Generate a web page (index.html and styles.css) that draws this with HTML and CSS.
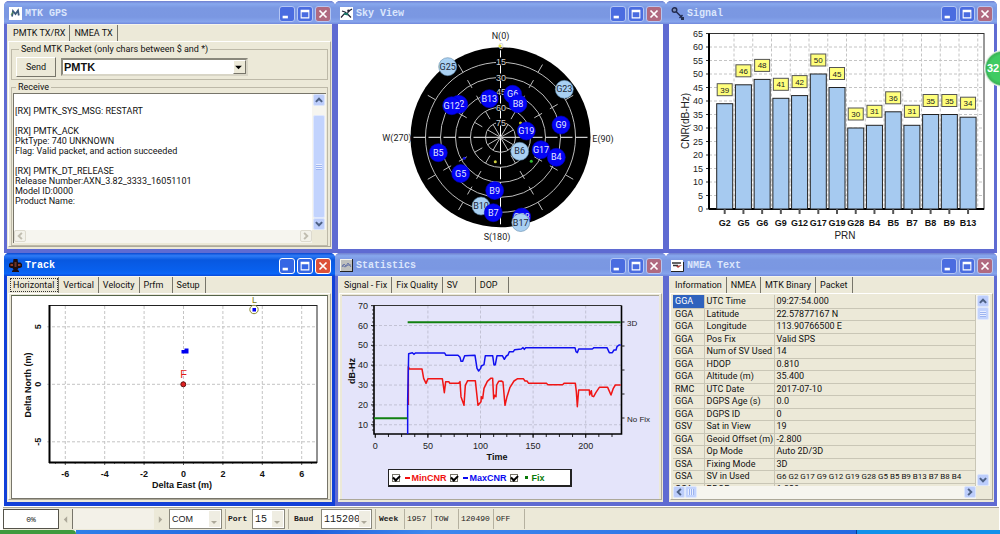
FILE: index.html
```html
<!DOCTYPE html>
<html lang="en">
<head>
<meta charset="utf-8">
<title>MTK GPS</title>
<link rel="stylesheet" href="styles.css">
</head>
<body>
<svg class="defs" aria-hidden="true">
  <symbol id="i-min" viewBox="0 0 16 16"><rect x="3" y="10" width="6" height="3" fill="#fff"/></symbol>
  <symbol id="i-max" viewBox="0 0 16 16"><path d="M3 3h10v10H3z M4.200 6v5.800h7.600V6z" fill="#fff" fill-rule="evenodd"/></symbol>
  <symbol id="i-close" viewBox="0 0 16 16"><path d="M4 4l8 8M12 4l-8 8" stroke="#fff" stroke-width="2"/></symbol>
  <symbol id="a-up" viewBox="0 0 8 8"><path d="M1.500 5.500L4 3l2.500 2.500" fill="none" stroke="currentColor" stroke-width="1.600"/></symbol>
  <symbol id="a-down" viewBox="0 0 8 8"><path d="M1.500 2.500L4 5l2.500-2.500" fill="none" stroke="currentColor" stroke-width="1.600"/></symbol>
  <symbol id="a-left" viewBox="0 0 8 8"><path d="M5.500 1.500L3 4l2.500 2.500" fill="none" stroke="currentColor" stroke-width="1.600"/></symbol>
  <symbol id="a-right" viewBox="0 0 8 8"><path d="M2.500 1.500L5 4L2.500 6.500" fill="none" stroke="currentColor" stroke-width="1.600"/></symbol>
</svg>
<main class="desktop">

  <section class="win">
    <header class="title">
      <svg class="ico" viewBox="0 0 13 13"><rect width="13" height="13" fill="#fff"/><path d="M3 9.500L4 4l2.500 3L9 3.500l.8 5" fill="none" stroke="#3c5a7c" stroke-width="1.800"/><path d="M2 8l2-3" stroke="#5a9a50" stroke-width="1"/></svg>
      <h2>MTK GPS</h2>
      <button class="cap" aria-label="Minimize"><svg><use href="#i-min"/></svg></button><button class="cap" aria-label="Maximize"><svg><use href="#i-max"/></svg></button><button class="cap close" aria-label="Close"><svg><use href="#i-close"/></svg></button>
    </header>
    <div class="body">
      <nav class="tabs"><button class="tab on">PMTK TX/RX</button><button class="tab">NMEA TX</button></nav>
      <div class="page">
        <fieldset class="group send">
          <legend>Send MTK Packet (only chars between $ and *)</legend>
          <div class="sendrow">
            <button class="push">Send</button>
            <div class="combo"><input type="text" value="PMTK" aria-label="Packet"><button aria-label="Open list"><svg viewBox="0 0 8 8"><path d="M1 2.500h6L4 5.500z"/></svg></button></div>
          </div>
        </fieldset>
        <fieldset class="group receive">
          <legend>Receive</legend>
          <div class="scrollbox">
            <textarea aria-label="Receive" readonly>

[RX] PMTK_SYS_MSG: RESTART

[RX] PMTK_ACK
PktType: 740 UNKNOWN
Flag: Valid packet, and action succeeded

[RX] PMTK_DT_RELEASE
Release Number:AXN_3.82_3333_16051101
Model ID:0000
Product Name:</textarea>
            <div class="vbar"><button aria-label="Up"><svg><use href="#a-up"/></svg></button><i class="gap-s"></i><i class="thumb"></i><button aria-label="Down"><svg><use href="#a-down"/></svg></button></div>
            <div class="hbar off"><button aria-label="Left"><svg><use href="#a-left"/></svg></button><i class="gap"></i><button aria-label="Right"><svg><use href="#a-right"/></svg></button></div>
          </div>
        </fieldset>
      </div>
    </div>
  </section>

  <section class="win">
    <header class="title">
      <svg class="ico" viewBox="0 0 13 13"><rect width="13" height="13" fill="#fff"/><path d="M1 10.500l3-3.500h3l2-3 3-2M2 4l3 1 3 2.500 3 3" fill="none" stroke="#223" stroke-width="1.200"/><path d="M4 6.500l4 1" stroke="#1b7b6a" stroke-width="2.200"/><circle cx="8.500" cy="3.800" r="1.300" fill="#223"/></svg>
      <h2>Sky View</h2>
      <button class="cap" aria-label="Minimize"><svg><use href="#i-min"/></svg></button><button class="cap" aria-label="Maximize"><svg><use href="#i-max"/></svg></button><button class="cap close" aria-label="Close"><svg><use href="#i-close"/></svg></button>
    </header>
    <div class="body white"><svg id="sky" class="chart" viewBox="338 24 325 225" role="img" aria-label="Sky view"></svg></div>
  </section>

  <section class="win">
    <header class="title">
      <svg class="ico" viewBox="0 0 13 13"><circle cx="3.500" cy="3" r="2.300" fill="#7d8fb8" stroke="#222b50" stroke-width="1.400"/><path d="M5 4.500L11 10.500M8.500 11L11.500 8" stroke="#222b50" stroke-width="1.500"/><rect x="10" y="10" width="3" height="3" fill="#26304f"/></svg>
      <h2>Signal</h2>
      <button class="cap" aria-label="Minimize"><svg><use href="#i-min"/></svg></button><button class="cap" aria-label="Maximize"><svg><use href="#i-max"/></svg></button><button class="cap close" aria-label="Close"><svg><use href="#i-close"/></svg></button>
    </header>
    <div class="body white"><svg id="signal" class="chart" viewBox="669 24 325 225" role="img" aria-label="Signal"></svg></div>
  </section>

  <section class="win active">
    <header class="title">
      <svg class="ico" viewBox="0 0 13 13"><path d="M4.500 0h4l.5 3.500h2.500L13 5v3l-2 1H9.500l-1 1.500L10 12v1H3v-1l1.500-1.500-1-1.500H2L0 8V5l1.500-1.500H4z" fill="#1a0d12"/><rect x="1.500" y="5" width="2.500" height="2" fill="#8c3b2c"/><rect x="9" y="5" width="2.500" height="2" fill="#8c3b2c"/><rect x="5.500" y="3" width="2" height="5" fill="#6a3428"/></svg>
      <h2>Track</h2>
      <button class="cap" aria-label="Minimize"><svg><use href="#i-min"/></svg></button><button class="cap" aria-label="Maximize"><svg><use href="#i-max"/></svg></button><button class="cap close" aria-label="Close"><svg><use href="#i-close"/></svg></button>
    </header>
    <div class="body">
      <nav class="tabs"><button class="tab on focus">Horizontal</button><button class="tab">Vertical</button><button class="tab">Velocity</button><button class="tab">Prfm</button><button class="tab">Setup</button></nav>
      <div class="page"><div class="sunk"><svg id="track" class="chart" viewBox="12 296 315 202" role="img" aria-label="Track"></svg></div></div>
    </div>
  </section>

  <section class="win">
    <header class="title">
      <svg class="ico" viewBox="0 0 13 13"><rect width="13" height="13" fill="#222"/><rect width="12" height="12" fill="#f4f4ee"/><rect x="1" y="1" width="11" height="11" fill="#bfc0bd"/><path d="M2 8l2-3 2 2 2-3 3 4M2 6l3 2 3-2 3 0" fill="none" stroke="#6a76a8" stroke-width="1"/></svg>
      <h2>Statistics</h2>
      <button class="cap" aria-label="Minimize"><svg><use href="#i-min"/></svg></button><button class="cap" aria-label="Maximize"><svg><use href="#i-max"/></svg></button><button class="cap close" aria-label="Close"><svg><use href="#i-close"/></svg></button>
    </header>
    <div class="body">
      <nav class="tabs"><button class="tab on">Signal - Fix</button><button class="tab">Fix Quality</button><button class="tab">SV</button><button class="tab">DOP</button></nav>
      <div class="page"><div class="stat">
        <svg id="stats" class="chart" viewBox="342 296 317 173" role="img" aria-label="Statistics"></svg>
        <div class="legend">
          <label class="red"><input type="checkbox" checked><i class="dash"></i>MinCNR</label>
          <label class="blue"><input type="checkbox" checked><i class="dash"></i>MaxCNR</label>
          <label class="green"><input type="checkbox" checked><i class="dash dot"></i>Fix</label>
        </div>
      </div></div>
    </div>
  </section>

  <section class="win">
    <header class="title">
      <svg class="ico" viewBox="0 0 13 13"><rect y="1" width="12" height="11" fill="#fff"/><path d="M0 12.500h12.500V3" fill="none" stroke="#222" stroke-width="1"/><path d="M1 4h9M2 6.500h5" stroke="#333" stroke-width="1.500"/><path d="M5 7l6-1-4 3z" fill="#b0403c"/></svg>
      <h2>NMEA Text</h2>
      <button class="cap" aria-label="Minimize"><svg><use href="#i-min"/></svg></button><button class="cap" aria-label="Maximize"><svg><use href="#i-max"/></svg></button><button class="cap close" aria-label="Close"><svg><use href="#i-close"/></svg></button>
    </header>
    <div class="body">
      <nav class="tabs"><button class="tab on">Information</button><button class="tab">NMEA</button><button class="tab">MTK Binary</button><button class="tab">Packet</button></nav>
      <div class="page"><div class="scrollbox grid">
        <div class="rows"><table>
          <tr><td class="sel">GGA</td><td>UTC Time</td><td>09:27:54.000</td></tr>
          <tr><td>GGA</td><td>Latitude</td><td>22.57877167 N</td></tr>
          <tr><td>GGA</td><td>Longitude</td><td>113.90766500 E</td></tr>
          <tr><td>GGA</td><td>Pos Fix</td><td>Valid SPS</td></tr>
          <tr><td>GGA</td><td>Num of SV Used</td><td>14</td></tr>
          <tr><td>GGA</td><td>HDOP</td><td>0.810</td></tr>
          <tr><td>GGA</td><td>Altitude (m)</td><td>35.400</td></tr>
          <tr><td>RMC</td><td>UTC Date</td><td>2017-07-10</td></tr>
          <tr><td>GGA</td><td>DGPS Age (s)</td><td>0.0</td></tr>
          <tr><td>GGA</td><td>DGPS ID</td><td>0</td></tr>
          <tr><td>GSV</td><td>Sat in View</td><td>19</td></tr>
          <tr><td>GGA</td><td>Geoid Offset (m)</td><td>-2.800</td></tr>
          <tr><td>GSA</td><td>Op Mode</td><td>Auto 2D/3D</td></tr>
          <tr><td>GSA</td><td>Fixing Mode</td><td>3D</td></tr>
          <tr><td>GSA</td><td>SV in Used</td><td class="dense">G6 G2 G17 G9 G12 G19 G28 G5 B5 B9 B13 B7 B8 B4</td></tr>
          <tr><td>GSA</td><td>PDOP</td><td>1.320</td></tr>
        </table></div>
        <div class="vbar"><button aria-label="Up"><svg><use href="#a-up"/></svg></button><i class="thumb small"></i><i class="gap"></i><button aria-label="Down"><svg><use href="#a-down"/></svg></button></div>
        <div class="hbar"><button aria-label="Left"><svg><use href="#a-left"/></svg></button><i class="thumb small"></i><i class="gap"></i><button aria-label="Right"><svg><use href="#a-right"/></svg></button></div>
      </div></div>
    </div>
  </section>
  <div class="badge">32</div>
</main>

<footer class="status">
  <div class="pct">0%</div>
  <div class="hscroll"><button aria-label="Back"><svg viewBox="0 0 8 8"><path d="M5.500 1v6l-3-3z" fill="#aca899"/></svg></button><i class="track"></i><button aria-label="Forward"><svg viewBox="0 0 8 8"><path d="M2.500 1v6l3-3z" fill="#aca899"/></svg></button></div>
  <div class="drop com"><select aria-label="Interface"><option>COM</option></select></div>
  <label class="cell port" for="port">Port</label>
  <div class="drop num"><select id="port"><option>15</option></select></div>
  <label class="cell baud" for="baud">Baud</label>
  <div class="drop rate"><select id="baud"><option>115200</option></select></div>
  <div class="cell week">Week</div><div class="cell w1957">1957</div><div class="cell tow">TOW</div><div class="cell secs">120490</div><div class="cell offc">OFF</div><div class="cell rest"></div>
</footer>
<div class="taskbar"><i class="start"></i><i class="tasks"></i><i class="tray"></i></div>
<script src="charts.js"></script>
</body>
</html>
```
FILE: styles.css
```css
* { box-sizing: border-box; }
body { margin: 0; min-height: 100vh; display: flex; flex-direction: column; overflow-x: hidden; background: #fff;
  font-family: Roboto, "Liberation Sans", sans-serif; font-size: 9px; line-height: 12px; color: #111; }
button, input, select, textarea { font: inherit; color: inherit; padding: 0; margin: 0; border: 0; background: none; border-radius: 0; }
h2 { margin: 0; }
svg { display: block; }
.defs { position: absolute; width: 0; height: 0; }

.desktop { position: relative; display: grid; grid-template-columns: repeat(3, minmax(0, 1fr)); padding: 1px 3px 0 4px; overflow: hidden; }
.win { display: flex; flex-direction: column; padding: 0 3px 4px; background: #5f6bd2; border-radius: 5px 5px 0 0; min-width: 0; }
.win.active { background: #1240d8; }
.title { display: flex; align-items: center; height: 23px; margin: 0 -3px; padding: 2px 4px 0 5px; gap: 2px; border-radius: 5px 5px 0 0;
  background: linear-gradient(#7080cf, #87a8ee 12%, #7b98e2 30%, #7a97e2 70%, #86a4ec 90%, #7088dc); }
.active .title { background: linear-gradient(#0a48d0, #2f7cf6 12%, #0858e0 30%, #0860ee 75%, #0a66f8 90%, #0848d8); }
.ico { width: 13px; height: 13px; }
.title h2 { flex: 1; padding-left: 1px; font: bold 10px/12px "Liberation Mono", monospace; color: #dbe6fc; }
.active .title h2 { color: #fff; }
.cap { width: 16px; height: 16px; border: 1px solid #b4c6f4; border-radius: 3px; background: #4a6ce0; }
.cap svg { width: 14px; height: 14px; }
.cap.close { background: #b06a80; }
.active .cap { background: #3566e4; border-color: #fff; }
.active .cap.close { background: #dd5138; }

.body { flex: 1; display: flex; flex-direction: column; background: #ece9d8; }
.white { background: #fff; }
.chart { width: 100%; height: auto; font-family: Roboto, "Liberation Sans", sans-serif; }
.tabs { display: flex; height: 17px; padding-left: 2px; border-top: 1px solid #f7f5ea; }
.tab { min-width: 33px; padding: 1px 4px 0; border-right: 1px solid #77756a; line-height: 15px; text-align: left; white-space: nowrap; }
.tab.on { padding-top: 0; padding-bottom: 1px; line-height: 14px; }
.tab.focus { outline: 1px dotted #333; outline-offset: -2px; }
.page { flex: 1; display: flex; flex-direction: column; margin: 0 1px 2px; padding: 1px 2px 0; border: 1px solid #fff; border-right-color: #aca899; border-bottom-color: #aca899; }

.group { min-width: 0; margin: 0; padding: 0; border: 1px solid #bdb9a8; }
.group legend { margin-left: 3px; padding: 0 2px; line-height: 12px; }
.send { padding: 2px 4px; }
.sendrow { display: flex; gap: 5px; }
.push { width: 40px; height: 20px; border: 1px solid; border-color: #fff #77756a #77756a #fff; }
.combo { display: flex; width: 187px; height: 18px; margin-top: 1px; background: #fff; border: 2px solid; border-color: #8a887c #d8d5c6 #d8d5c6 #8a887c; }
.combo input { flex: 1; min-width: 0; padding-left: 1px; font: bold 11px/14px "Liberation Sans", sans-serif; }
.combo button { width: 13px; background: #ece9d8; border: 1px solid; border-color: #fff #77756a #77756a #fff; }
.combo svg { width: 9px; height: 9px; }
.receive { flex: 1; display: flex; margin-top: 1px; padding: 0 1px 2px; }

.scrollbox { flex: 1; display: grid; grid-template: minmax(0, 1fr) 13px / minmax(0, 1fr) 14px; min-width: 0; width: 100%; height: 100%; border-left: 1px solid #77756a; border-top: 1px solid #77756a; background: #ece9d8; }
.scrollbox textarea { resize: none; width: 100%; height: 100%; padding: 2px 1px; overflow: hidden; background: #fff; line-height: 10px; outline: 0; white-space: pre; }
.vbar, .hbar { display: flex; background: #f6f5ef; color: #4d6185; }
.vbar { grid-column: 2; flex-direction: column; padding: 0 1px; }
.hbar { grid-column: 1; }
.vbar button, .hbar button { width: 12px; height: 12px; flex: none; border: 1px solid #dbe5fb; border-radius: 2px; background: #bccdfb; }
.vbar svg, .hbar svg { width: 10px; height: 10px; }
.thumb { display: grid; place-items: center; flex: 1; width: 12px; border: 1px solid #e0e8fd; border-radius: 2px; background: #c2d3fd; }
.thumb::after { content: ""; width: 6px; height: 6px; background: repeating-linear-gradient(#e8eeff, #e8eeff 1px, #9db4f0 1px, #9db4f0 2px); }
.thumb.small { flex: none; height: 13px; }
.hbar .thumb.small { height: 12px; }
.hbar .thumb::after { background: repeating-linear-gradient(90deg, #e8eeff, #e8eeff 1px, #9db4f0 1px, #9db4f0 2px); }
.gap { flex: 1; }
.gap-s { height: 9px; }
.off { color: #c0bdb0; }
.hbar.off button { background: #f3f2ea; border-color: #dddace; }

.sunk { flex: 1; background: #fff; border: 1px solid #77756a; border-top-color: #55644a; }
.stat { flex: 1; background: #e4e4fa; display: flex; flex-direction: column; align-items: center; padding-bottom: 8px; border-top: 1px solid #aca899; }
.legend { display: flex; width: 184px; height: 18px; padding-left: 3px; align-items: center; gap: 3px; background: #fff; border: 1px solid #222; border-right-width: 2px; border-bottom-width: 2px; margin-right: 42px; }
.legend label { display: flex; align-items: center; gap: 2px; font: bold 9px/10px "Liberation Sans", sans-serif; }
.legend input { appearance: none; width: 8px; height: 8px; margin-right: 3px; border: 1px solid #77756a; background: #fff; display: grid; place-items: center; }
.legend input:checked::after { content: ""; width: 5px; height: 3px; border: solid #000; border-width: 0 0 2px 2px; transform: rotate(-45deg); }
.dash { width: 5px; height: 2px; background: currentColor; }
.dash.dot { width: 3px; height: 3px; margin: 0 2px; }
.red { color: #f01010; } .blue { color: #0a0aef; } .green { color: #0a7a0a; }

.grid { border: 0; }
.rows { height: 191px; overflow: hidden; }
table { width: 100%; border-collapse: collapse; table-layout: fixed; }
tr { height: 13px; } tr:nth-child(even) { height: 12px; }
td { padding: 0 0 0 2px; line-height: 11px; border-right: 1px solid #c9c6b6; border-bottom: 1px solid #c9c6b6; white-space: nowrap; overflow: hidden; }
td:nth-child(1) { width: 31px; } td:nth-child(2) { width: 70px; }
td.sel { background: #2f62bd; color: #fff; }
td.dense { font-size: 8px; }

.badge { position: absolute; right: -21px; top: 50px; width: 37px; height: 37px; border-radius: 50%; padding-left: 3px; background: radial-gradient(#3ecb62 50%, #3ab556 62%, #e8f0e8 68%); color: #fff; font: bold 11px/36px "Liberation Sans", sans-serif; }

.status { display: flex; align-items: stretch; height: 23px; margin: 1px 1px 0 3px; padding: 1px 0; background: #ece9d8; border-top: 1px solid #aca899; font: 8px/20px "Liberation Mono", monospace; color: #222; }
.pct { width: 56px; background: #fff; border: 1px solid #55534a; text-align: center; }
.hscroll { display: flex; width: 108px; }
.hscroll button { width: 13px; } .hscroll svg { width: 9px; height: 9px; margin: auto; }
.track { flex: 1; background: #f3f1e8; border-left: 1px solid #77756a; }
.drop { position: relative; background: #fff; border: 1px solid #8a887c; margin: 0 3px 0 2px; }
.drop select { appearance: none; width: 100%; height: 100%; padding-left: 2px; font: 11px/16px "Liberation Sans", sans-serif; color: #222; }
.drop::after { content: ""; position: absolute; right: 1px; top: 1px; bottom: 1px; width: 11px; pointer-events: none; background: #efede2; }
.drop::before { content: ""; position: absolute; z-index: 1; right: 4px; bottom: 4px; border: 3px solid transparent; border-top-color: #aca899; border-bottom: 0; pointer-events: none; }
.com { width: 53px; } .com select { font-size: 9px; }
.num { width: 33px; } .rate { width: 51px; }
.num select, .rate select { font-family: "Liberation Mono", monospace; font-size: 10px; }
.cell { border-left: 1px solid #b5b1a0; padding-left: 2px; white-space: nowrap; }
.port { width: 25px; } .baud { width: 31px; padding-left: 5px; }
.port, .baud, .week { font-weight: bold; }
.week { width: 29px; padding-left: 3px; } .w1957 { width: 27px; } .tow { width: 27px; } .secs { width: 35px; } .offc { width: 31px; } .rest { flex: 1; }
.taskbar { display: flex; flex: 1; min-height: 4px; }
.start { width: 76px; background: #3f9a3f; border-radius: 0 4px 0 0; }
.tasks { flex: 1; background: linear-gradient(90deg, #2f7fe8, #1f5fdc 30%, #3f88ee 45%, #2468e0); }
.tray { width: 144px; background: #1291ea; border-left: 1px solid #0a3a90; }
```
FILE: charts.js
```js
const NS = "http://www.w3.org/2000/svg";
function add(parent, tag, attrs, text) {
  const el = document.createElementNS(NS, tag);
  for (const k in attrs) el.setAttribute(k, attrs[k]);
  if (text !== undefined) el.textContent = text;
  parent.appendChild(el);
  return el;
}
const line = (p, x1, y1, x2, y2, stroke, extra) => add(p, "line", { x1, y1, x2, y2, stroke, ...extra });
const label = (p, x, y, text, size, extra) =>
  add(p, "text", { x, y, "font-size": size, "text-anchor": "middle", fill: "#222", ...extra }, text);
const SANS = { "font-family": "Liberation Sans, sans-serif" };
const BOLD = { ...SANS, "font-weight": "bold", fill: "#111" };
const GRID = { "stroke-dasharray": "3 2" };

/* Sky view */
{
  const s = document.getElementById("sky"), cx = 500.5, cy = 137.3;
  add(s, "circle", { cx, cy, r: 90, fill: "#000" });
  for (const r of [75, 60, 45, 30, 15]) add(s, "circle", { cx, cy, r, fill: "none", stroke: "#bdbdbd" });
  for (let a = 0; a < 360; a += 30) {
    const c = Math.cos(a * Math.PI / 180), n = Math.sin(a * Math.PI / 180);
    const main = a % 90 === 0;
    line(s, cx, cy, cx + 15 * c, cy + 15 * n, main ? "#fff" : "#bdbdbd");
    line(s, cx + 15 * c, cy + 15 * n, cx + 90 * c, cy + 90 * n, main ? "#fff" : "#bdbdbd",
      { "stroke-dasharray": main ? "12 3" : "9 9", "stroke-dashoffset": main ? 0 : -6 });
  }
  [["0", 46], ["15", 61.5], ["30", 77.5], ["45", 92], ["60", 107.5], ["75", 122.5]].forEach(([t, y]) => {
    if (t !== "0") add(s, "rect", { x: 496, y: y - 4, width: 10, height: 7, fill: "#000" });
    label(s, 501, y + 3, t, 9, { fill: "#d4d4d4", ...SANS });
  });
  label(s, 500.5, 38.5, "N(0)", 9); label(s, 397, 141, "W(270)", 9);
  label(s, 603, 141.500, "E(90)", 9); label(s, 497, 240, "S(180)", 9);
  [[520.5, 123, "#c8c820"], [464.3, 158.3, "#1010e0"], [495.3, 161.7, "#d0d040"], [531.3, 161.3, "#30c030"], [500, 46, "#e8e840"]]
    .forEach(([x, y, f]) => add(s, "circle", { cx: x, cy: y, r: 1.5, fill: f }));
  [["G25", 447.7, 66.7, 0], ["G23", 564.3, 89.3, 0], ["G2", 458.7, 104.3, 1], ["G12", 451.7, 105.7, 1],
   ["B13", 489.3, 98.7, 1], ["G6", 512.7, 94.3, 1], ["B8", 518, 103.7, 1], ["G9", 561, 125, 1], ["G19", 526.3, 131, 1],
   ["B6", 519.7, 151.3, 0], ["G17", 541, 149.7, 1], ["B4", 556.3, 157.3, 1], ["B5", 438.3, 152.7, 1], ["G5", 460.7, 173.5, 1],
   ["B9", 494.7, 190.5, 1], ["B10", 481, 206, 0], ["B7", 493.3, 212.7, 1], ["G28", 521.7, 217, 1], ["B17", 520.7, 222.5, 0]]
    .forEach(([t, x, y, used]) => {
      add(s, "circle", { cx: x, cy: y, r: 9, fill: used ? "#0404f4" : "#a9d0f2", stroke: used ? "#0000c8" : "#5d87a8", "stroke-width": 0.6 });
      label(s, x, y + 3, t, 9, { fill: used ? "#e4e8ff" : "#1c2838" });
    });
}

/* Signal strength bars */
{
  const s = document.getElementById("signal"), L = 709, R = 984, T = 33.5, B = 209, k = 2.7;
  for (let v = 0; v <= 65; v += 5) {
    const y = B - v * k;
    if (v) line(s, L, y, R, y, "#c4c4c4", GRID);
    line(s, L - 3, y, L, y, "#333");
    label(s, 703, y + 3, v, 9, { ...SANS, "text-anchor": "end" });
  }
  const data = [["G2", 39], ["G5", 46], ["G6", 48], ["G9", 41], ["G12", 42], ["G17", 50], ["G19", 45], ["G28", 30],
    ["B4", 31], ["B5", 36], ["B7", 31], ["B8", 35], ["B9", 35], ["B13", 34]];
  data.forEach((d, i) => line(s, 734 + i * 18.75, T, 734 + i * 18.75, B, "#c4c4c4", GRID));
  add(s, "rect", { x: L, y: T, width: R - L, height: B - T, fill: "none", stroke: "#333" });
  line(s, L, T, L, B, "#000", { "stroke-width": 2 });
  line(s, L, B, R, B, "#000", { "stroke-width": 2 });
  data.forEach(([n, v], i) => {
    const x = 724.7 + i * 18.72, y = B - v * k;
    add(s, "rect", { x: x - 8, y, width: 16, height: B - y, fill: "#a6caf0", stroke: "#222" });
    add(s, "rect", { x: x - 7.500, y: y - 20, width: 15, height: 12, fill: "#ffff7c", stroke: "#555" });
    label(s, x, y - 11, v, 8, SANS);
    line(s, x, B, x, B + 5, "#555", { "stroke-width": 2 });
    label(s, x, 226, n, 9, BOLD);
  });
  label(s, 845, 238.5, "PRN", 10, SANS);
  label(s, 0, 0, "CNR(dB-Hz)", 10, { ...SANS, transform: "translate(689 121) rotate(-90)" });
}

/* Horizontal track plot */
{
  const s = document.getElementById("track");
  for (let v = -6; v <= 6; v += 2) {
    const x = 183.5 + v * 19.7;
    line(s, x, 306, x, 462, "#c4c4c4", GRID);
    line(s, x, 462, x, 465, "#555");
    label(s, x, 477, v, 9, BOLD);
  }
  for (let v = -6.5; v <= 6.5; v += 0.5) line(s, 183.5 + v * 19.7, 462, 183.5 + v * 19.7, 464, "#777");
  for (const v of [5, 0, -5]) {
    const y = 384.3 - v * 11.5;
    line(s, 47, y, 317, y, "#c4c4c4", GRID);
    label(s, 0, 0, v, 9, { ...BOLD, transform: `translate(41 ${y}) rotate(-90)` });
  }
  add(s, "rect", { x: 49.5, y: 305.5, width: 267.5, height: 157, fill: "none", stroke: "#222" });
  line(s, 49.5, 305, 49.5, 463, "#000", { "stroke-width": 2 });
  line(s, 49, 462.5, 317, 462.5, "#000", { "stroke-width": 2 });
  label(s, 182, 488, "Delta East (m)", 9, BOLD);
  label(s, 0, 0, "Delta North (m)", 9, { ...BOLD, transform: "translate(31 385) rotate(-90)" });
  add(s, "path", { d: "M181.500 350h3v-1.500h4v5h-7z", fill: "#0000f0" });
  label(s, 183.7, 378, "F", 11, { ...SANS, fill: "#e01818" });
  add(s, "circle", { cx: 183.3, cy: 384.3, r: 2.5, fill: "#e02020", stroke: "#601010" });
  label(s, 254.5, 303, "L", 9, { ...SANS, fill: "#7a7a10" });
  add(s, "circle", { cx: 254, cy: 309.5, r: 4.2, fill: "#fff", stroke: "#8a8a30" });
  add(s, "rect", { x: 252.5, y: 308, width: 3.5, height: 3.5, fill: "#0000f0" });
}

/* Signal and fix statistics */
{
  const s = document.getElementById("stats"), L = 374, R = 621.5, T = 305.5, B = 434;
  for (let v = 10; v <= 70; v += 10) {
    const y = 444.6 - v * 1.985;
    if (v < 70) line(s, L, y, R, y, "#c2c2d4", GRID);
    line(s, L - 3, y, L, y, "#222");
    label(s, 368, y + 3, v, 9, { ...SANS, "text-anchor": "end" });
  }
  for (let y = 310; y < 434; y += 4) line(s, L - 2, y, L, y, "#444");
  for (let v = 0; v <= 200; v += 50) {
    const x = 375.3 + v * 1.052;
    if (v) line(s, x, T, x, B, "#c2c2d4", GRID);
    line(s, x, B, x, B + 4, "#222");
    label(s, x, 449, v, 9, SANS);
  }
  for (let i = 0; i < 19; i++) line(s, 375.3 + i * 13.15, B, 375.3 + i * 13.15, B + 3, "#222");
  line(s, L, T, R, T, "#333");
  add(s, "path", { d: `M${L} ${T}V${B}H${R}V${T}`, fill: "none", stroke: "#000", "stroke-width": 1.6 });
  [322, 346, 370, 394, 418].forEach(y => line(s, R, y, R + 3, y, "#222"));
  label(s, 627, 325.5, "3D", 8, { ...SANS, "text-anchor": "start" });
  label(s, 627, 421.5, "No Fix", 8, { ...SANS, "text-anchor": "start" });
  label(s, 497, 460, "Time", 9, BOLD);
  label(s, 0, 0, "dB-Hz", 9, { ...BOLD, transform: "translate(355 371) rotate(-90)" });
  const g = add(s, "g", { transform: "translate(380 300) scale(.33333)", fill: "none", "stroke-width": 4.5, "stroke-linejoin": "round" });
  add(g, "path", { stroke: "#f01414", d: "M85 315V200L88 207H126L131 235L138 250L144 236H187L193 278L197 245H207L209 250H236L240 245L243 290L252 316L256 256L263 242H286L294 316L303 305L304 290L308 296L312 265L322 244L332 235H338L341 296L344 286L348 290L350 255L356 244L364 243L369 246L375 316L381 290L390 262L402 243L413 236H430L435 243H441L446 250H500L503 254H548L552 250H586L589 275L592 320L596 270H628L629 285L634 272L636 288L641 290L648 277L658 262H683L693 285L700 265L706 255H722" });
  add(g, "path", { stroke: "#1010f0", d: "M83 402V300L86 161L97 158L102 163L106 159H194L198 166H234L240 172L243 184H248L254 167L285 166L291 205L296 213L302 205L304 198L312 194L316 167H338L342 195L346 194L351 167H367L373 178L379 168L384 165L388 155H400L404 149L424 147L429 143L433 148L437 143H585L588 155L592 158L596 147H637L642 143H681L688 158H697L702 150H708L711 140L717 135H722" });
  add(g, "path", { stroke: "#108010", "stroke-width": 6, d: "M83 67H722M-18 355H82" });
}
```
